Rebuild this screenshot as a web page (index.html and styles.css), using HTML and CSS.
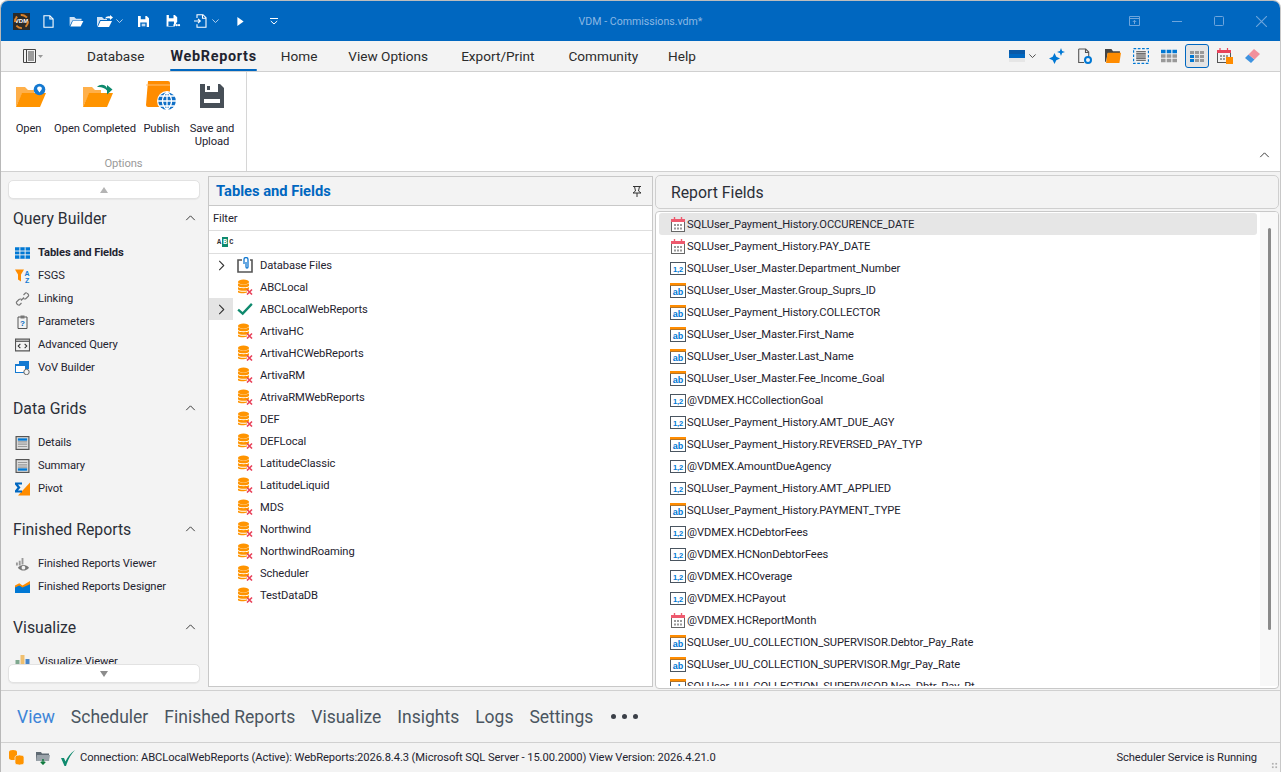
FILE: index.html
```html
<!DOCTYPE html>
<html lang="en">
<head>
<meta charset="utf-8">
<title>VDM - Commissions.vdm*</title>
<link rel="stylesheet" href="styles.css">
</head>
<body>
<svg class="defs" width="0" height="0" aria-hidden="true">
  <symbol id="db" viewBox="0 0 16 16">
    <ellipse cx="6.5" cy="3" rx="5.5" ry="2.4" fill="#ff9400"/>
    <path d="M1 4.3c1 1.6 10 1.6 11 0v2.4c-1 2-10 2-11 0zM1 8c1 1.6 10 1.6 11 0v2.2c-1 2-10 2-11 0zM1 11.5c1 1.6 8 1.6 9 .7v1.2c-2 1.2-8 1-9-.2z" fill="#ff9400"/>
    <path d="M10 10.5l5 5M15 10.5l-5 5" stroke="#e8425a" stroke-width="1.6"/>
  </symbol>
  <symbol id="date" viewBox="0 0 16 15">
    <rect x="1.500" y="2.500" width="13" height="12" fill="#fff" stroke="#666"/>
    <rect x="1" y="2" width="14" height="3" fill="#ee5a6e"/>
    <path d="M4.500 0v3M11.500 0v3" stroke="#ee5a6e" stroke-width="1.400"/>
    <path d="M4 7h2v2H4zM7 7h2v2H7zM10 7h2v2h-2zM4 10.500h2v2H4zM7 10.500h2v2H7zM10 10.500h2v2h-2z" fill="#9a9a9a"/>
  </symbol>
  <symbol id="num" viewBox="0 0 16 15">
    <rect x=".5" y="1.500" width="15" height="12" fill="#fff" stroke="#4a5560"/>
    <text x="8" y="10.500" text-anchor="middle" class="glyph">1,2</text>
  </symbol>
  <symbol id="ab" viewBox="0 0 16 15">
    <rect x=".5" y="2.500" width="15" height="12" fill="#fff" stroke="#4a5560"/>
    <rect x="0" y="0" width="16" height="2.600" fill="#ff8c00"/>
    <text x="8" y="11.500" text-anchor="middle" class="glyph glyph-ab">ab</text>
  </symbol>
  <symbol id="chev-up" viewBox="0 0 12 7"><path d="M1 6l5-5 5 5" fill="none" stroke="#333" stroke-width="1.1"/></symbol>
  <symbol id="chev-right" viewBox="0 0 7 12"><path d="M1 1l5 5-5 5" fill="none" stroke="#333" stroke-width="1.2"/></symbol>
  <symbol id="chev-down" viewBox="0 0 9 5"><path d="M.5.5l4 4 4-4" fill="none" stroke="currentColor" stroke-width="1.1"/></symbol>
</svg>

<div class="window">
  <header class="titlebar">
    <div class="qat">
      <span class="logo">VDM</span>
      <svg class="qi qi-new" viewBox="0 0 12 14"><path d="M1 .7h6.500l3.500 3.500v9H1zM7.500.7v3.500H11" fill="none" stroke="#fff" stroke-width="1.200"/></svg>
      <svg class="qi qi-open" viewBox="0 0 15 12"><path d="M0 1h5l2 2h6v2H3L0 11z" fill="#cfe2f5"/><path d="M3.500 5.500H15L12 11.500H.8z" fill="#fff"/></svg>
      <span class="qgroup qgroup-a">
        <svg class="qi-w" viewBox="0 0 16 13"><path d="M0 2h5l2 2h3v1H3L0 12z" fill="#cfe2f5"/><path d="M3.500 6H15l-3 6H.8z" fill="#fff"/><path d="M8 3.500c1-2 3-2.500 5-2V0l3 2.500L13 5V3.500c-2-.5-3.500 0-5 0z" fill="#fff"/></svg>
        <svg class="qc" viewBox="0 0 9 5"><use href="#chev-down"/></svg>
      </span>
      <svg class="qi qi-save" viewBox="0 0 12 12"><path d="M0 0h9.500L12 2.500V12H0z" fill="#fff"/><path d="M3 0h5v3.500H3zM2.500 7h7v5h-7z" fill="#0067c0"/><path d="M4 8.500h4v1H4zM4 10.200h4v1H4z" fill="#fff"/></svg>
      <svg class="qi qi-saveas" viewBox="0 0 15 13"><path d="M0 0h9l2.500 2.500V7l-3 5.500H0z" fill="#fff"/><path d="M2.500 0h5v3.500h-5zM2 7h6v5H2z" fill="#0067c0"/><circle cx="8.500" cy="11" r="1.200" fill="#fff"/><circle cx="11" cy="11" r="1.200" fill="#fff"/><circle cx="13.500" cy="11" r="1.200" fill="#fff"/></svg>
      <span class="qgroup qgroup-b">
        <svg class="qi-w2" viewBox="0 0 15 14"><path d="M3 4V.7h6l3 3v9.600H3v-3M8.500.7v3.500H12" fill="none" stroke="#fff" stroke-width="1.100"/><path d="M0 7h6M4 4.800L6.300 7 4 9.200" fill="none" stroke="#fff" stroke-width="1.100"/></svg>
        <svg class="qc" viewBox="0 0 9 5"><use href="#chev-down"/></svg>
      </span>
      <svg class="qi qi-play" viewBox="0 0 7 10"><path d="M0 0l7 5-7 5z" fill="#fff"/></svg>
      <svg class="qi qi-more" viewBox="0 0 8 7"><path d="M0 .5h8M.8 3l3.200 3 3.200-3" fill="none" stroke="#fff"/></svg>
    </div>
    <div class="doc-title">VDM - Commissions.vdm*</div>
    <div class="winbtns">
      <svg class="wb wb-ribbon" viewBox="0 0 11 10"><path d="M.5.500h10v9H.5zM.5 2.500h10M5.500 8V4.500M3.800 6l1.700-1.700L7.200 6" fill="none" stroke="#6ea5dc"/></svg>
      <svg class="wb wb-min" viewBox="0 0 10 1"><path d="M0 .5h10" stroke="#6ea5dc"/></svg>
      <svg class="wb wb-max" viewBox="0 0 10 10"><rect x=".5" y=".5" width="9" height="9" rx="1" fill="none" stroke="#6ea5dc"/></svg>
      <svg class="wb wb-close" viewBox="0 0 10 10"><path d="M0 0l10 10M10 0L0 10" stroke="#6ea5dc"/></svg>
    </div>
  </header>

  <nav class="menubar">
    <svg class="app-menu" viewBox="0 0 20 14"><path d="M.5.500h12v13H.5zM3.500.500v13M5 3h6M5 5h6M5 7h6M5 9h6M5 11h6" fill="none" stroke="#444"/><path d="M15 6h5l-2.500 3z" fill="#999"/></svg>
    <a class="tab tab-database">Database</a>
    <a class="tab tab-webreports">WebReports</a>
    <a class="tab tab-home">Home</a>
    <a class="tab tab-view">View Options</a>
    <a class="tab tab-export">Export/Print</a>
    <a class="tab tab-community">Community</a>
    <a class="tab tab-help">Help</a>
    <div class="tools">
      <span class="tool-theme">
        <svg class="t-theme" viewBox="0 0 16 12"><rect width="16" height="4" fill="#0a5aa8"/><rect y="4" width="16" height="4" fill="#0067c0"/><rect y="8" width="16" height="4" fill="#e6e6e6"/></svg>
        <svg class="qc qc-dark" viewBox="0 0 9 5"><use href="#chev-down"/></svg>
      </span>
      <svg class="ti" viewBox="0 0 16 16"><path d="M5.500 5l1.800 3.700L11 10.500l-3.700 1.800L5.500 16l-1.800-3.700L0 10.500l3.700-1.800z" fill="#0078d4"/><path d="M12 0l1.100 2.900L16 4l-2.900 1.100L12 8l-1.100-2.900L8 4l2.900-1.100z" fill="#0078d4"/></svg>
      <svg class="ti" viewBox="0 0 14 16"><path d="M.7 1h7l3 3v5M7.500 1v3.500h3M6 14.500H.7V1" fill="none" stroke="#555" stroke-width="1.100"/><circle cx="10" cy="12" r="3" fill="none" stroke="#0078d4" stroke-width="2"/></svg>
      <svg class="ti" viewBox="0 0 15 13"><path d="M0 0h6l1.500 2H14v2H2.500L1 12H0z" fill="#444"/><path d="M2.500 3.500H15L13.500 13H1z" fill="#ff8c00"/></svg>
      <svg class="ti" viewBox="0 0 15 15"><rect x=".5" y=".5" width="14" height="14" fill="none" stroke="#0078d4" stroke-width="1.200" stroke-dasharray="2.500 1.500"/><path d="M3 3.500h9M3 5.500h9M3 7.500h9M3 9.500h9M3 11.500h9" stroke="#444"/></svg>
      <svg class="ti" viewBox="0 0 14 11"><path d="M0 0h4v3H0zM5 0h4v3H5zM10 0h4v3h-4z" fill="#0078d4"/><path d="M0 4h4v3H0zM5 4h4v3H5zM10 4h4v3h-4zM0 8h4v3H0zM5 8h4v3H5zM10 8h4v3h-4z" fill="#999"/></svg>
      <span class="tool-active"><svg class="ti-a" viewBox="0 0 14 11"><path d="M5 0h4v3H5zM10 0h4v3h-4zM0 0h4v3H0zM5 4h4v3H5zM10 4h4v3h-4zM5 8h4v3H5zM10 8h4v3h-4z" fill="#999"/><path d="M0 4h4v3H0zM0 8h4v3H0z" fill="#0078d4"/></svg></span>
      <svg class="ti" viewBox="0 0 16 16"><rect x=".5" y="2.500" width="13" height="12" fill="none" stroke="#555"/><rect y="2" width="14" height="3" fill="#e8425a"/><path d="M3 0v3M10.500 0v3" stroke="#e8425a" stroke-width="1.200"/><path d="M3 7h2v2H3zM6 7h2v2H6zM9 7h2v2H9zM3 10h2v2H3zM6 10h2v2H6z" fill="#999"/><rect x="9" y="9" width="7" height="7" fill="#ff8c00"/></svg>
      <svg class="ti" viewBox="0 0 16 14"><path d="M0 9l6 5 3.500-3.500-6-5z" fill="#3f93e0"/><path d="M3.500 5.500L9 0l6 5-5.500 5.500z" fill="#f2909c"/></svg>
    </div>
  </nav>

  <section class="ribbon">
    <div class="rb-group">
      <div class="rb-items">
        <div class="rb-btn rb-open">
          <span class="rb-ico">
            <svg class="i-open" viewBox="0 0 31 25"><path d="M1 4h9l3 3h6v4H7L1 24z" fill="#ffb04a"/><path d="M7 10h24l-6 14H1z" fill="#ff9400"/><circle cx="24.500" cy="6.500" r="5.800" fill="#1479d1"/><path d="M24.500 3.500c-2 0-3 1.800-2 3.200l2 2.800 2-2.800c1-1.400 0-3.200-2-3.200z" fill="#fff"/></svg>
          </span>
          <span class="rb-label">Open</span>
        </div>
        <div class="rb-btn rb-completed">
          <span class="rb-ico">
            <svg class="i-open" viewBox="0 0 31 25"><path d="M1 4h9l3 3h6v4H7L1 24z" fill="#ffb04a"/><path d="M7 10h24l-6 14H1z" fill="#ff9400"/><path d="M15 4c3-3 8-3 10 1V2l5.500 4.500-5.500 5V7.500C23 5 19 3.500 15 4z" fill="#0f8a6e"/></svg>
          </span>
          <span class="rb-label">Open Completed</span>
        </div>
        <div class="rb-btn rb-publish">
          <span class="rb-ico">
            <svg class="i-pub" viewBox="0 0 31 29"><path d="M2 0h20a2 2 0 0 1 2 2v24H2a2 2 0 0 1-2-2z" fill="#ff8c00"/><path d="M0 4h24" stroke="#ffc27a" stroke-width="1"/><circle cx="21" cy="20" r="10" fill="#fff"/><circle cx="21" cy="20" r="8.800" fill="#0f6fc6"/><path d="M12 20h18M13.500 15h15M13.500 25h15M21 11v18M21 11c-6 5-6 13 0 18M21 11c6 5 6 13 0 18" fill="none" stroke="#fff" stroke-width="1.300"/></svg>
          </span>
          <span class="rb-label">Publish</span>
        </div>
        <div class="rb-btn rb-save">
          <span class="rb-ico">
            <svg class="i-save" viewBox="0 0 24 24"><path d="M0 0h20l4 4v20H0z" fill="#474f57"/><path d="M5 0h13v8H5zM4 15h16v4H4z" fill="#fff"/><path d="M7 2h3v4H7z" fill="#474f57"/></svg>
          </span>
          <span class="rb-label">Save and<br>Upload</span>
        </div>
      </div>
      <div class="rb-caption">Options</div>
    </div>
    <svg class="rb-collapse" viewBox="0 0 12 7"><use href="#chev-up"/></svg>
  </section>

  <main class="workspace">
    <aside class="sidenav">
      <div class="scrollbtn"><span class="tri-up"></span></div>
      <div class="nav-scroll">
        <div class="nav-head nav-head-first"><span>Query Builder</span><svg class="nav-chev" viewBox="0 0 12 7"><use href="#chev-up"/></svg></div>
        <ul class="nav-list">
          <li class="nav-item is-current"><svg class="ni" viewBox="0 0 13 10"><path d="M0 0h13v10H0z" fill="#0078d4"/><path d="M4.200 0v10M8.800 0v10M0 3.300h13M0 6.600h13" stroke="#f3f3f3" stroke-width=".8"/></svg>Tables and Fields</li>
          <li class="nav-item"><svg class="ni" viewBox="0 0 15 13"><path d="M0 0h9L6 5v7L3 10V5z" fill="#ff8c00"/><text x="12" y="6" class="glyph-az">A</text><text x="12" y="13" class="glyph-az">Z</text></svg>FSGS</li>
          <li class="nav-item"><svg class="ni" viewBox="0 0 14 14"><path d="M5.500 8.500l3-3M8 3l2-2c1-1 4 2 3 3l-2.500 2.500c-1 1-2.500.5-3-.5M6 11l-2 2c-1 1-4-2-3-3l2.500-2.500c1-1 2.500-.5 3 .5" fill="none" stroke="#777" stroke-width="1.100"/></svg>Linking</li>
          <li class="nav-item"><svg class="ni" viewBox="0 0 14 14"><path d="M2.500 2h9v11.500h-9z" fill="none" stroke="#555"/><path d="M5 .5h4v3H5z" fill="#777"/><text x="7" y="11" text-anchor="middle" class="glyph-q">?</text></svg>Parameters</li>
          <li class="nav-item"><svg class="ni" viewBox="0 0 14 12"><path d="M.5.500h13v11H.5z" fill="none" stroke="#555"/><path d="M.5 2.500h13" stroke="#555" stroke-width="1.200"/><path d="M5 5L3 7l2 2M9 5l2 2-2 2" fill="none" stroke="#333"/></svg>Advanced Query</li>
          <li class="nav-item"><svg class="ni" viewBox="0 0 15 14"><rect x="4" y="0" width="10" height="8" fill="#1479d1"/><rect x=".5" y="3.500" width="10" height="8" fill="#fff" stroke="#1479d1"/><path d="M0 3h11v2H0z" fill="#1479d1"/><circle cx="11.500" cy="11" r="2.700" fill="#f3f3f3" stroke="#666"/></svg>VoV Builder</li>
        </ul>
        <div class="nav-head"><span>Data Grids</span><svg class="nav-chev" viewBox="0 0 12 7"><use href="#chev-up"/></svg></div>
        <ul class="nav-list">
          <li class="nav-item"><svg class="ni" viewBox="0 0 12 12"><rect x=".5" y=".5" width="11" height="11" fill="#ddd" stroke="#555"/><path d="M2 2h8v2H2z" fill="#0078d4"/><path d="M2 5h8M2 7h8M2 9h8" stroke="#999"/></svg>Details</li>
          <li class="nav-item"><svg class="ni" viewBox="0 0 12 12"><rect x=".5" y=".5" width="11" height="11" fill="#ddd" stroke="#555"/><path d="M2 8h8v2H2z" fill="#0078d4"/><path d="M2 3h8M2 5h8M2 7h8" stroke="#999"/></svg>Summary</li>
          <li class="nav-item"><svg class="ni" viewBox="0 0 15 13"><path d="M15 0v13H3z" fill="#ff8c00"/><path d="M0 0h7v2H3l2.500 3L3 8h4v2H0v-2l2.500-3L0 2z" fill="#0067c0"/></svg>Pivot</li>
        </ul>
        <div class="nav-head"><span>Finished Reports</span><svg class="nav-chev" viewBox="0 0 12 7"><use href="#chev-up"/></svg></div>
        <ul class="nav-list">
          <li class="nav-item"><svg class="ni" viewBox="0 0 16 15"><path d="M1 6h2v3H1zM4 4h2v5H4zM7 1h2v7H7z" fill="#999"/><path d="M3 11.500c3-4 9-4 12 0-3 4-9 4-12 0z" fill="#777"/><circle cx="9" cy="11.500" r="2" fill="#f3f3f3"/></svg>Finished Reports Viewer</li>
          <li class="nav-item"><svg class="ni" viewBox="0 0 14 11"><path d="M0 4l4-2 3 2 7-4v4L7 7 4 5 0 7z" fill="#ff8c00"/><path d="M0 6l4-2 3 2 7-3v8H0z" fill="#0078d4"/></svg>Finished Reports Designer</li>
        </ul>
        <div class="nav-head"><span>Visualize</span><svg class="nav-chev" viewBox="0 0 12 7"><use href="#chev-up"/></svg></div>
        <ul class="nav-list">
          <li class="nav-item"><svg class="ni" viewBox="0 0 14 14"><path d="M5 0h4v14H5z" fill="#f0c070"/><path d="M0 5h4v9H0z" fill="#7fa88f"/><path d="M10 4h4v10h-4z" fill="#4a86c8"/></svg>Visualize Viewer</li>
        </ul>
      </div>
      <div class="scrollbtn scrollbtn-bottom"><span class="tri-down"></span></div>
    </aside>

    <section class="tables-panel">
      <div class="tp-head">
        <h2>Tables and Fields</h2>
        <svg class="pin" viewBox="0 0 10 11"><path d="M1 .5h8M2.500.5L3.500 5 1 7h8L6.500 5l1-4.500M5 7v4" fill="none" stroke="#333"/></svg>
      </div>
      <div class="tp-filter">Filter</div>
      <div class="tp-abc"><span class="abc-a">A</span><span class="abc-b">B</span><span class="abc-c">C</span></div>
      <ul class="tree">
        <li class="tree-row"><span class="tree-exp"><svg class="tree-chev" viewBox="0 0 7 12"><use href="#chev-right"/></svg></span><svg class="tree-ico" viewBox="0 0 16 16"><path d="M5 3H1v12h14V3h-2" fill="none" stroke="#555" stroke-width="1.600"/><path d="M7 7V2.500a2 2 0 0 1 4 0V10a1 1 0 0 1-2 0V5" fill="none" stroke="#1479d1" stroke-width="1.300"/></svg>Database Files</li>
        <li class="tree-row"><span class="tree-exp"></span><svg class="tree-ico" viewBox="0 0 16 16"><use href="#db"/></svg>ABCLocal</li>
        <li class="tree-row"><span class="tree-exp is-hover"><svg class="tree-chev" viewBox="0 0 7 12"><use href="#chev-right"/></svg></span><svg class="tree-ico" viewBox="0 0 14 12"><path d="M1 6.500L5 10l8-8.500" fill="none" stroke="#0f8a6e" stroke-width="2"/></svg>ABCLocalWebReports</li>
        <li class="tree-row"><span class="tree-exp"></span><svg class="tree-ico" viewBox="0 0 16 16"><use href="#db"/></svg>ArtivaHC</li>
        <li class="tree-row"><span class="tree-exp"></span><svg class="tree-ico" viewBox="0 0 16 16"><use href="#db"/></svg>ArtivaHCWebReports</li>
        <li class="tree-row"><span class="tree-exp"></span><svg class="tree-ico" viewBox="0 0 16 16"><use href="#db"/></svg>ArtivaRM</li>
        <li class="tree-row"><span class="tree-exp"></span><svg class="tree-ico" viewBox="0 0 16 16"><use href="#db"/></svg>AtrivaRMWebReports</li>
        <li class="tree-row"><span class="tree-exp"></span><svg class="tree-ico" viewBox="0 0 16 16"><use href="#db"/></svg>DEF</li>
        <li class="tree-row"><span class="tree-exp"></span><svg class="tree-ico" viewBox="0 0 16 16"><use href="#db"/></svg>DEFLocal</li>
        <li class="tree-row"><span class="tree-exp"></span><svg class="tree-ico" viewBox="0 0 16 16"><use href="#db"/></svg>LatitudeClassic</li>
        <li class="tree-row"><span class="tree-exp"></span><svg class="tree-ico" viewBox="0 0 16 16"><use href="#db"/></svg>LatitudeLiquid</li>
        <li class="tree-row"><span class="tree-exp"></span><svg class="tree-ico" viewBox="0 0 16 16"><use href="#db"/></svg>MDS</li>
        <li class="tree-row"><span class="tree-exp"></span><svg class="tree-ico" viewBox="0 0 16 16"><use href="#db"/></svg>Northwind</li>
        <li class="tree-row"><span class="tree-exp"></span><svg class="tree-ico" viewBox="0 0 16 16"><use href="#db"/></svg>NorthwindRoaming</li>
        <li class="tree-row"><span class="tree-exp"></span><svg class="tree-ico" viewBox="0 0 16 16"><use href="#db"/></svg>Scheduler</li>
        <li class="tree-row"><span class="tree-exp"></span><svg class="tree-ico" viewBox="0 0 16 16"><use href="#db"/></svg>TestDataDB</li>
      </ul>
    </section>

    <section class="fields-panel">
      <div class="fp-head">Report Fields</div>
      <div class="fp-body">
        <ul class="fields">
          <li class="field is-selected"><svg class="fi" viewBox="0 0 16 15"><use href="#date"/></svg>SQLUser_Payment_History.OCCURENCE_DATE</li>
          <li class="field"><svg class="fi" viewBox="0 0 16 15"><use href="#date"/></svg>SQLUser_Payment_History.PAY_DATE</li>
          <li class="field"><svg class="fi" viewBox="0 0 16 15"><use href="#num"/></svg>SQLUser_User_Master.Department_Number</li>
          <li class="field"><svg class="fi" viewBox="0 0 16 15"><use href="#ab"/></svg>SQLUser_User_Master.Group_Suprs_ID</li>
          <li class="field"><svg class="fi" viewBox="0 0 16 15"><use href="#ab"/></svg>SQLUser_Payment_History.COLLECTOR</li>
          <li class="field"><svg class="fi" viewBox="0 0 16 15"><use href="#ab"/></svg>SQLUser_User_Master.First_Name</li>
          <li class="field"><svg class="fi" viewBox="0 0 16 15"><use href="#ab"/></svg>SQLUser_User_Master.Last_Name</li>
          <li class="field"><svg class="fi" viewBox="0 0 16 15"><use href="#ab"/></svg>SQLUser_User_Master.Fee_Income_Goal</li>
          <li class="field"><svg class="fi" viewBox="0 0 16 15"><use href="#num"/></svg>@VDMEX.HCCollectionGoal</li>
          <li class="field"><svg class="fi" viewBox="0 0 16 15"><use href="#num"/></svg>SQLUser_Payment_History.AMT_DUE_AGY</li>
          <li class="field"><svg class="fi" viewBox="0 0 16 15"><use href="#ab"/></svg>SQLUser_Payment_History.REVERSED_PAY_TYP</li>
          <li class="field"><svg class="fi" viewBox="0 0 16 15"><use href="#num"/></svg>@VDMEX.AmountDueAgency</li>
          <li class="field"><svg class="fi" viewBox="0 0 16 15"><use href="#num"/></svg>SQLUser_Payment_History.AMT_APPLIED</li>
          <li class="field"><svg class="fi" viewBox="0 0 16 15"><use href="#ab"/></svg>SQLUser_Payment_History.PAYMENT_TYPE</li>
          <li class="field"><svg class="fi" viewBox="0 0 16 15"><use href="#num"/></svg>@VDMEX.HCDebtorFees</li>
          <li class="field"><svg class="fi" viewBox="0 0 16 15"><use href="#num"/></svg>@VDMEX.HCNonDebtorFees</li>
          <li class="field"><svg class="fi" viewBox="0 0 16 15"><use href="#num"/></svg>@VDMEX.HCOverage</li>
          <li class="field"><svg class="fi" viewBox="0 0 16 15"><use href="#num"/></svg>@VDMEX.HCPayout</li>
          <li class="field"><svg class="fi" viewBox="0 0 16 15"><use href="#date"/></svg>@VDMEX.HCReportMonth</li>
          <li class="field"><svg class="fi" viewBox="0 0 16 15"><use href="#ab"/></svg>SQLUser_UU_COLLECTION_SUPERVISOR.Debtor_Pay_Rate</li>
          <li class="field"><svg class="fi" viewBox="0 0 16 15"><use href="#ab"/></svg>SQLUser_UU_COLLECTION_SUPERVISOR.Mgr_Pay_Rate</li>
          <li class="field"><svg class="fi" viewBox="0 0 16 15"><use href="#ab"/></svg>SQLUser_UU_COLLECTION_SUPERVISOR.Non_Dbtr_Pay_Rt</li>
        </ul>
        <div class="vscroll"><span class="vthumb"></span></div>
      </div>
    </section>
  </main>

  <nav class="viewtabs">
    <a class="vt is-active">View</a>
    <a class="vt">Scheduler</a>
    <a class="vt">Finished Reports</a>
    <a class="vt">Visualize</a>
    <a class="vt">Insights</a>
    <a class="vt">Logs</a>
    <a class="vt">Settings</a>
    <span class="vt-more"><i></i><i></i><i></i></span>
  </nav>

  <footer class="statusbar">
    <svg class="si si-dbs" viewBox="0 0 15 15"><path d="M0 2a4 2 0 0 1 8 0v6a4 2 0 0 1-8 0z" fill="#ff9400"/><path d="M6 7a4.500 2 0 0 1 9 0v6a4.500 2 0 0 1-9 0z" fill="#ff9400" stroke="#f3f3f3" stroke-width=".7"/></svg>
    <svg class="si si-dl" viewBox="0 0 14 14"><path d="M0 1h5l1 1.500h7V10H0z" fill="#5f6a73"/><path d="M1 4h13l-1 6H0z" fill="#9aa3aa"/><path d="M7 8v5M4.800 10.800L7 13l2.200-2.200" fill="none" stroke="#0f7a3e" stroke-width="1.500"/></svg>
    <svg class="si si-check" viewBox="0 0 14 16"><path d="M0 8l3 0 1.500 3.500C6.500 7 9.500 3 14 0 10 4 7 9.500 5 16H3.500z" fill="#0f8a6e"/></svg>
    <span class="status-text">Connection: ABCLocalWebReports (Active): WebReports:2026.8.4.3 (Microsoft SQL Server - 15.00.2000) View Version: 2026.4.21.0</span>
    <span class="status-right">Scheduler Service is Running</span>
    <span class="grip"></span>
  </footer>
</div>
</body>
</html>
```
FILE: styles.css
```css
* { box-sizing: border-box; }
html, body { margin: 0; padding: 0; height: 100%; overflow: hidden; background: #fff; }
body { font-family: "Roboto", "Liberation Sans", sans-serif; font-size: 11.200px; letter-spacing: -.1px; color: #1f2430; }
ul { list-style: none; margin: 0; padding: 0; }
.defs { position: absolute; }
.glyph { font: bold 7.500px "Liberation Sans", sans-serif; fill: #0078d4; }
.glyph-ab { font-size: 9px; }
.glyph-az { font: bold 7px "Liberation Sans", sans-serif; fill: #1479d1; text-anchor: middle; }
.glyph-q { font: bold 8px "Liberation Sans", sans-serif; fill: #0067c0; }

.window { width: 1281px; height: 772px; display: flex; flex-direction: column; background: #f3f3f3; border-left: 1px solid #b8b8b8; border-right: 1px solid #c8c8c8; border-top: 1px solid #bdbdbd; border-radius: 8px 8px 0 0; overflow: hidden; }

.titlebar { height: 40px; flex: none; background: #0067c0; display: flex; align-items: center; position: relative; color: #fff; }
.qat { display: flex; align-items: center; padding-left: 12px; }
.logo { width: 17px; height: 17px; background: #2a2a2a; color: #fff; font: bold 6px "Liberation Sans", sans-serif; letter-spacing: 0; display: flex; align-items: center; justify-content: center; margin-right: 13px; position: relative; }
.logo::before { content: ""; position: absolute; inset: 1px; border: 2px dashed #d9822b; border-radius: 50%; }
.qi { flex: none; display: block; }
.qi-new { width: 11px; height: 13px; margin-right: 15px; }
.qi-open { width: 15px; height: 11px; margin-right: 13px; }
.qgroup { display: flex; align-items: center; }
.qi-w { width: 16px; height: 13px; }
.qc { width: 7px; height: 4px; color: #cfe2f5; margin-left: 3px; }
.qc-dark { color: #333; margin-left: 4px; }
.qgroup-a { margin-right: 15px; }
.qi-save { width: 11px; height: 11px; margin-right: 17px; }
.qi-saveas { width: 15px; height: 12px; margin-right: 13px; }
.qi-w2 { width: 15px; height: 14px; }
.qgroup-b { margin-right: 18px; }
.qi-play { width: 7px; height: 9px; margin-right: 26px; }
.qi-more { width: 8px; height: 7px; }
.doc-title { position: absolute; left: 0; right: 0; top: 14px; text-align: center; font-size: 10.600px; letter-spacing: 0; color: #8bb8e4; pointer-events: none; }
.winbtns { margin-left: auto; display: flex; align-items: center; padding-right: 13px; }
.wb { display: block; flex: none; }
.wb-ribbon { width: 11px; height: 10px; margin-right: 32px; }
.wb-min { width: 10px; height: 1px; margin-right: 32px; }
.wb-max { width: 10px; height: 10px; margin-right: 32px; }
.wb-close { width: 11px; height: 11px; }

.menubar { height: 31px; flex: none; background: #f3f3f3; border-bottom: 1px solid #d0d0d0; display: flex; align-items: stretch; position: relative; font-size: 13.600px; letter-spacing: 0; color: #2b2b2b; }
.app-menu { width: 20px; height: 14px; margin: 8px 0 0 22px; flex: none; }
.tab { display: flex; align-items: center; height: 30px; flex: none; }
.tab-database { margin-left: 44px; }
.tab-webreports { margin-left: 26px; font-weight: 700; font-size: 14.400px; letter-spacing: .7px; position: relative; color: #1f2430; }
.tab-webreports::after { content: ""; position: absolute; left: 0; right: 0; bottom: 0; height: 2px; background: #0067c0; border-radius: 1px; }
.tab-home { margin-left: 24px; }
.tab-view { margin-left: 31px; }
.tab-export { margin-left: 33px; }
.tab-community { margin-left: 34px; }
.tab-help { margin-left: 30px; }
.tools { margin-left: auto; display: flex; align-items: center; padding-right: 19px; gap: 12px; height: 30px; }
.tool-theme { display: flex; align-items: center; margin-right: 1px; }
.t-theme { width: 16px; height: 12px; display: block; }
.ti { width: 16px; height: 16px; display: block; flex: none; }
.tool-active { width: 24px; height: 24px; border: 1px solid #0067c0; border-radius: 3px; background: #e4e4e4; display: flex; align-items: center; justify-content: center; margin: 0 -4px; }
.ti-a { width: 14px; height: 11px; display: block; }

.ribbon { height: 100px; flex: none; background: #fff; border-bottom: 1px solid #d0d0d0; display: flex; position: relative; }
.rb-group { width: 246px; border-right: 1px solid #d6d6d6; display: flex; flex-direction: column; }
.rb-items { display: flex; flex: 1; padding-top: 9px; }
.rb-btn { display: flex; flex-direction: column; align-items: center; text-align: center; line-height: 13px; color: #1f2430; }
.rb-ico { height: 41px; display: flex; align-items: flex-start; justify-content: center; }
.rb-label { display: block; white-space: nowrap; }
.rb-open { width: 55px; }
.rb-open .i-open { margin-left: 3px; }
.rb-completed { width: 78px; }
.rb-completed .i-open { margin-left: 4px; }
.rb-publish { width: 55px; }
.rb-save { width: 46px; }
.i-open { width: 31px; height: 25px; margin-top: 2px; }
.i-pub { width: 31px; height: 29px; }
.i-save { width: 24px; height: 24px; margin-top: 3px; }
.rb-caption { text-align: center; color: #9a9a9a; height: 14px; }
.rb-collapse { position: absolute; right: 10px; top: 80px; width: 11px; height: 6px; }

.workspace { flex: 1; min-height: 0; display: flex; background: #f3f3f3; padding: 3px 1px 1px 7px; border-bottom: 1px solid #d0d0d0; }
.sidenav { width: 192px; flex: none; display: flex; flex-direction: column; padding: 5px 0 6px; margin-right: 8px; }
.scrollbtn { height: 19px; flex: none; background: #fff; border: 1px solid #e2e2e2; border-radius: 5px; display: flex; align-items: center; justify-content: center; box-shadow: 0 1px 1px rgba(0,0,0,.05); }
.tri-up { width: 0; height: 0; border: 4px solid transparent; border-top: 0; border-bottom: 6px solid #b4b4b4; }
.tri-down { width: 0; height: 0; border: 4px solid transparent; border-bottom: 0; border-top: 6px solid #8c8c8c; }
.nav-scroll { flex: 1; min-height: 0; overflow: hidden; padding-left: 5px; }
.nav-head { display: flex; align-items: center; justify-content: space-between; font-size: 15.800px; letter-spacing: 0; color: #2b2f38; height: 26px; margin-top: 16px; padding-right: 4px; }
.nav-head-first { margin-top: 6px; }
.nav-chev { width: 11px; height: 6px; }
.nav-list { margin-top: 10px; }
.nav-item { height: 23px; display: flex; align-items: center; white-space: nowrap; }
.ni { width: 15px; height: 14px; margin: 0 8px 0 2px; flex: none; }
.is-current { font-weight: 700; }

.tables-panel { width: 445px; flex: none; display: flex; flex-direction: column; background: #fff; border: 1px solid #c8c8c8; margin: 1px 2px 2px 0; }
.tp-head { height: 29px; flex: none; background: #f3f3f3; border-bottom: 1px solid #c8c8c8; display: flex; align-items: center; justify-content: space-between; padding: 0 10px 0 7px; }
.tp-head h2 { margin: 0; font-size: 14.700px; letter-spacing: 0; font-weight: 700; color: #0067c0; }
.pin { width: 10px; height: 11px; }
.tp-filter { height: 25px; flex: none; border-bottom: 1px solid #dedede; display: flex; align-items: center; padding-left: 4px; }
.tp-abc { height: 23px; flex: none; border-bottom: 1px solid #dedede; display: flex; align-items: center; padding-left: 8px; font: bold 7px "Liberation Mono", monospace; color: #333; }
.abc-b { background: #0f8a6e; color: #fff; padding: 1px; margin: 0 1px; }
.tree { flex: 1; }
.tree-row { height: 22px; display: flex; align-items: center; white-space: nowrap; }
.tree-exp { width: 24px; height: 22px; margin-right: 4px; display: flex; align-items: center; justify-content: center; flex: none; }
.tree-exp.is-hover { background: #e4e4e4; }
.tree-chev { width: 7px; height: 11px; }
.tree-ico { width: 16px; height: 16px; margin-right: 7px; flex: none; }

.fields-panel { flex: 1; min-width: 0; display: flex; flex-direction: column; gap: 2px; }
.fp-head { height: 34px; flex: none; background: #f3f3f3; border: 1px solid #cfcfcf; border-radius: 5px; display: flex; align-items: center; padding-left: 15px; font-size: 15.800px; letter-spacing: 0; color: #2b2f38; }
.fp-body { flex: 1; min-height: 0; background: #fff; border: 1px solid #c8c8c8; border-radius: 4px; display: flex; overflow: hidden; padding-bottom: 2px; }
.fields { flex: 1; min-width: 0; padding: 1px 3px 0 3px; overflow: hidden; }
.field { height: 22px; display: flex; align-items: center; white-space: nowrap; padding-left: 11px; border-radius: 3px; }
.field.is-selected { background: #e6e6e6; }
.fi { width: 16px; height: 15px; flex: none; margin-right: 1px; }
.vscroll { width: 18px; flex: none; background: #f8f8f8; display: flex; justify-content: center; padding-top: 16px; }
.vthumb { width: 3px; height: 402px; background: #8a8a8a; border-radius: 2px; }

.viewtabs { height: 52px; flex: none; background: #f3f3f3; border-bottom: 1px solid #d0d0d0; display: flex; align-items: center; padding-left: 16px; gap: 16px; font-size: 17.500px; letter-spacing: 0; color: #4a5560; }
.vt.is-active { color: #3d85d8; }
.vt-more { display: flex; gap: 6px; margin-left: 2px; }
.vt-more i { width: 5px; height: 5px; background: #3a3f47; border-radius: 50%; }

.statusbar { height: 29px; flex: none; background: #f3f3f3; display: flex; align-items: center; padding-left: 8px; position: relative; color: #1f2430; }
.si { flex: none; display: block; }
.si-dbs { width: 15px; height: 15px; margin-right: 12px; }
.si-dl { width: 14px; height: 14px; margin-right: 11px; }
.si-check { width: 14px; height: 16px; margin-right: 5px; }
.status-right { margin-left: auto; padding-right: 23px; }
.grip { position: absolute; right: 2px; bottom: 3px; width: 7px; height: 7px; background: radial-gradient(circle, #b0b0b0 1px, transparent 1.200px) 0 0 / 3.500px 3.500px; }
```
